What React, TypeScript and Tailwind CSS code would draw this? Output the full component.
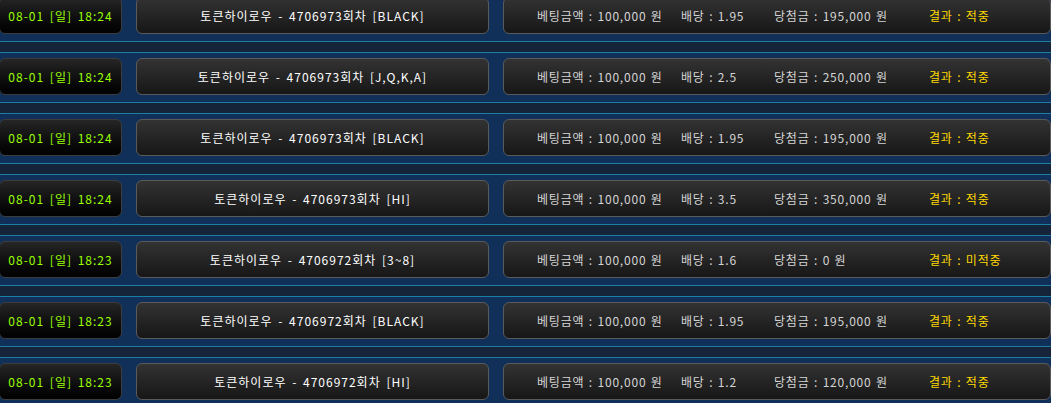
import React from "react";

type Row = {
  date: string;
  title: string;
  amount: string;
  odds: string;
  win: string;
  result: string;
};

const rows: Row[] = [
  { date: "08-01 [일] 18:24", title: "토큰하이로우 - 4706973회차 [BLACK]", amount: "100,000 원", odds: "1.95", win: "195,000 원", result: "적중" },
  { date: "08-01 [일] 18:24", title: "토큰하이로우 - 4706973회차 [J,Q,K,A]", amount: "100,000 원", odds: "2.5", win: "250,000 원", result: "적중" },
  { date: "08-01 [일] 18:24", title: "토큰하이로우 - 4706973회차 [BLACK]", amount: "100,000 원", odds: "1.95", win: "195,000 원", result: "적중" },
  { date: "08-01 [일] 18:24", title: "토큰하이로우 - 4706973회차 [HI]", amount: "100,000 원", odds: "3.5", win: "350,000 원", result: "적중" },
  { date: "08-01 [일] 18:23", title: "토큰하이로우 - 4706972회차 [3~8]", amount: "100,000 원", odds: "1.6", win: "0 원", result: "미적중" },
  { date: "08-01 [일] 18:23", title: "토큰하이로우 - 4706972회차 [BLACK]", amount: "100,000 원", odds: "1.95", win: "195,000 원", result: "적중" },
  { date: "08-01 [일] 18:23", title: "토큰하이로우 - 4706972회차 [HI]", amount: "100,000 원", odds: "1.2", win: "120,000 원", result: "적중" },
];

export default function App() {
  return (
    <div
      className="w-[1051px] h-[403px] overflow-hidden bg-[#10305a] text-[12px] leading-none tracking-[1px]"
      style={{ fontFamily: '"Noto Sans CJK KR", "Noto Sans", sans-serif' }}
    >
      <div className="mt-[-3px] flex flex-col">
        {rows.map((r, i) => (
          <div key={i} className="flex flex-col">
            <div className="flex h-[37px] gap-[14px]">
              <div className="ml-[-1px] flex w-[123px] items-center justify-center rounded-[6px] border border-[#3c3c3c] bg-gradient-to-b from-[#262626] to-[#020202] text-[#99ff00] [word-spacing:2px]">
                {r.date}
              </div>
              <div className="flex w-[353px] items-center justify-center rounded-[6px] border border-[#5a5a5a] bg-gradient-to-b from-[#333333] to-[#171717] text-white [word-spacing:2px]">
                {r.title}
              </div>
              <div className="flex w-[548px] items-center rounded-[6px] border border-[#5a5a5a] bg-gradient-to-b from-[#333333] to-[#171717] pl-[33px] text-[#d4d4d4] tracking-[0.8px] [word-spacing:1px]">
                <span className="w-[144px] shrink-0">베팅금액 : {r.amount}</span>
                <span className="w-[93px] shrink-0">배당 : {r.odds}</span>
                <span className="w-[155px] shrink-0">당첨금 : {r.win}</span>
                <span className="text-[#ffd800]">결과 : {r.result}</span>
              </div>
            </div>
            <div className="flex h-[24px] flex-col">
              <div className="h-[7px]" />
              <div className="h-px bg-[#1b7ea3]" />
              <div className="h-[10px] bg-[#16243a]" />
              <div className="h-px bg-[#1b7ea3]" />
            </div>
          </div>
        ))}
      </div>
    </div>
  );
}
